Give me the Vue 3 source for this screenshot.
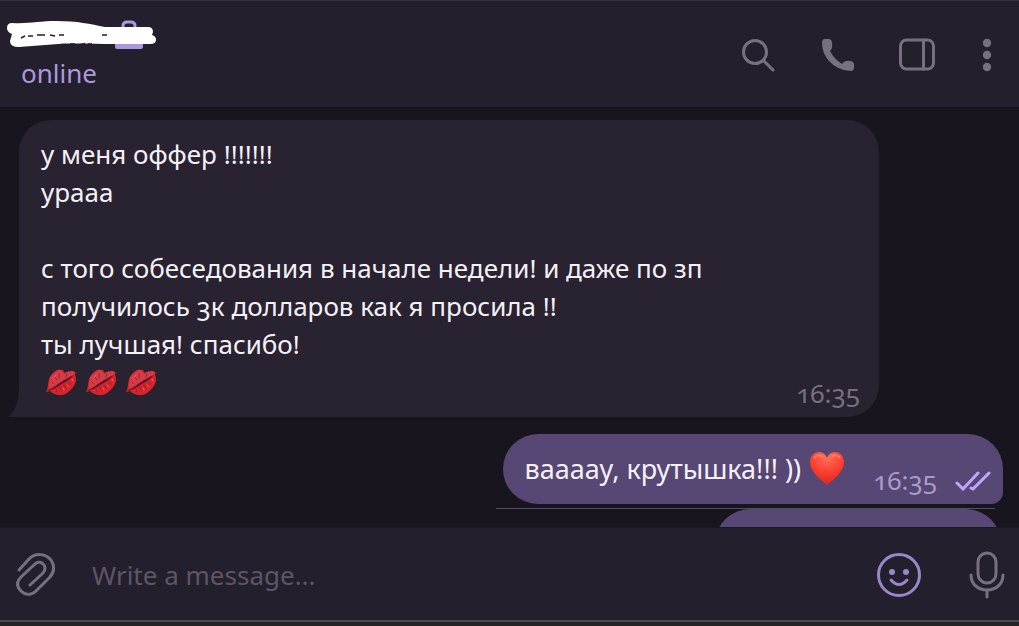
<script setup>
import { ref } from 'vue'

const draft = ref('')
const incoming = [
  'у меня оффер !!!!!!!',
  'урааа',
  '',
  'с того собеседования в начале недели! и даже по зп',
  'получилось 3к долларов как я просила !!',
  'ты лучшая! спасибо!'
]
</script>

<template>
  <div class="app">
    <header class="header">
      <div class="peer">
        <svg class="name" width="160" height="39" viewBox="0 0 160 39" aria-label="Hidden name" role="img">
          <path d="M123 13V11Q123 7 127 7H131Q135 7 135 11V13" fill="none" stroke="#ab98df" stroke-width="3" />
          <rect x="115" y="16" width="28" height="18" rx="2" fill="#ab98df" />
          <path d="M12 8C28 9 40 6 56 6C78 6 90 9 105 12H148Q153 12 153 17L152 20Q156 21 156 25Q156 29 150 29H115C94 29 78 28 58 29L19 32Q10 32 10 26L12 19Q7 17 7 13Q7 8 12 8Z" fill="#fff" />
          <path d="M21 23L25 21M28 21H33M37 20H45M50 20L55 21M59 20H64M102 20H107M61 29.500H66M70 29H75M79 30L85 28.500M88 29H92" stroke="#241f2c" stroke-width="1.500" />
        </svg>
        <span class="status">online</span>
      </div>
      <nav class="tools">
        <button aria-label="Search">
          <svg width="36" height="36" viewBox="0 0 36 36"><circle cx="14" cy="14" r="11.500" /><path d="M22.500 22.500L32 32" stroke-width="3" /></svg>
        </button>
        <button aria-label="Call">
          <svg width="36" height="36" viewBox="0 0 36 36"><path class="solid" d="M5 1H8Q12 1 12 5Q13 10 10 13Q14 21 22 26Q25 22 30 23Q34 23 34 27V30Q34 33 30 33Q17 32 9 23Q2 15 2 5Q2 1 5 1Z" /></svg>
        </button>
        <button aria-label="Toggle side panel">
          <svg width="36" height="36" viewBox="0 0 36 36"><rect x="1.500" y="2" width="33" height="29" rx="6" /><path d="M24.500 2V31" /></svg>
        </button>
        <button class="more" aria-label="More">
          <svg width="10" height="36" viewBox="0 0 10 36"><g class="solid"><circle cx="5" cy="5" r="4.200" /><circle cx="5" cy="17" r="4.200" /><circle cx="5" cy="29" r="4.200" /></g></svg>
        </button>
      </nav>
    </header>

    <main class="chat">
      <article class="bubble in">
        <p v-for="(line, i) in incoming" :key="i">{{ line }}</p>
        <div class="kisses">
          <svg v-for="n in 3" :key="n" width="32" height="28" viewBox="0 0 32 28" role="img" aria-label="Kiss mark">
            <path d="M1 24C4 20 2 14 5 9C8 4 13 0 17 2Q19 2 19 5C23 3 28 2 30 4Q31 5 30 7C33 13 29 20 22 25C16 29 9 27 5 23Z" fill="#d8232b" />
            <path d="M5 10C8 4 14 1 17 3L19 6C23 3 28 3 30 5L26 9L20 11L10 18L4 21Z" fill="#d63c48" />
            <path d="M2 23C7 20 10 19 13 16C18 13 24 9 29 7C24 12 19 15 15 17C11 20 7 22 2 23Z" fill="#4c1727" />
            <path d="M10 9L12 12M14 6V10M22 6L21 9M7 14L9 16M15 19L16 22M19 17L21 20M23 14L26 16M11 21L12 24" stroke="#9b1e30" stroke-width="1" stroke-linecap="round" />
            <path d="M18 20L19 22M22 17L24 19M9 10L11 7M27 11L28 13" stroke="#f1656b" stroke-width="1" stroke-linecap="round" />
          </svg>
        </div>
        <time>16:35</time>
        <svg class="tail" width="26" height="34" viewBox="0 0 26 34" aria-hidden="true"><path d="M11 0C11 19 8 27 0 34H26V0Z" /></svg>
      </article>

      <article class="bubble out">
        <p>ваааау, крутышка!!! ))</p>
        <svg class="heart" width="36" height="36" viewBox="0 0 36 36" role="img" aria-label="Red heart">
          <defs><radialGradient id="heart-fill" cx="50%" cy="15%" r="85%"><stop offset="0" stop-color="#ff725a" /><stop offset=".55" stop-color="#fc3f2f" /><stop offset="1" stop-color="#d92720" /></radialGradient></defs>
          <path d="M18 34C12 29 1 21 1 11C1 5 5 1 10 1C14 1 17 4 18 7C19 4 22 1 26 1C31 1 35 5 35 11C35 21 24 29 18 34Z" fill="url(#heart-fill)" />
          <path d="M5 7Q8 3 13 5M23 5Q28 3 31 7" fill="none" stroke="#ff9a83" stroke-width="2" stroke-linecap="round" opacity=".6" />
        </svg>
        <time>16:35</time>
        <svg class="checks" width="36" height="20" viewBox="0 0 36 20" role="img" aria-label="Read"><path d="M2 12L8 18L23 2M16 17L18 18L34 2" /></svg>
      </article>

      <div class="next">
        <div class="bubble pending"></div>
      </div>
    </main>

    <footer class="composer">
      <button aria-label="Attach a file">
        <svg width="40" height="44" viewBox="0 0 40 44"><path d="M3 17L13 6C20-1 30 1 35 7C39 13 38 19 34 24L20 38C15 43 9 42 5 38C0 33 1 28 5 24L19 11C22 8 26 9 28 12C30 15 29 18 26 21L14 32" /></svg>
      </button>
      <input v-model="draft" type="text" aria-label="Message" placeholder="Write a message..." />
      <button class="emoji" aria-label="Emoji">
        <svg width="44" height="44" viewBox="0 0 44 44"><circle cx="22" cy="22" r="20.500" /><g class="solid"><circle cx="15" cy="19" r="3" /><circle cx="29" cy="19" r="3" /></g><path d="M14 27Q22 36 30 27" /></svg>
      </button>
      <button class="mic" aria-label="Record voice message">
        <svg width="36" height="48" viewBox="0 0 36 48"><rect x="9" y="2" width="18" height="30" rx="9" /><path d="M2 24C2 44 34 44 34 24M18 39V46" /></svg>
      </button>
    </footer>
  </div>
</template>

<style>
body {
  margin: 0;
  background: #262324;
}
</style>

<style scoped>
.app {
  display: flex;
  flex-direction: column;
  height: 100vh;
  box-sizing: border-box;
  padding-bottom: 4px;
  color: #f4f1f7;
  background: #262324;
  font: 26px/38px "Noto Sans", sans-serif;
  font-variant-numeric: oldstyle-nums;
}

.header {
  display: flex;
  flex: none;
  justify-content: space-between;
  box-sizing: border-box;
  height: 107px;
  padding: 14px 27px 0 0;
  border-top: 1px solid #36323b;
  background: #241f2c;
}

.peer {
  display: flex;
  flex-direction: column;
}

.name {
  display: block;
}

.status {
  padding-left: 21px;
  color: #ab98df;
}

.tools {
  display: flex;
  align-items: center;
  gap: 43px;
  height: 82px;
}

.more {
  margin-left: 4px;
}

button {
  display: flex;
  padding: 0;
  border: 0;
  color: #777080;
  background: none;
  cursor: pointer;
}

button svg {
  fill: none;
  stroke: currentColor;
  stroke-width: 3;
  stroke-linecap: round;
  stroke-linejoin: round;
}

button .solid {
  fill: currentColor;
  stroke: none;
}

.chat {
  display: flex;
  flex: 1;
  flex-direction: column;
  min-height: 0;
  padding-top: 13px;
  overflow: hidden;
  background: #19151f;
}

.bubble {
  position: relative;
  flex: none;
  box-sizing: border-box;
}

.bubble p {
  min-height: 38px;
  margin: 0;
}

time {
  color: #77707e;
}

.in {
  margin: 0 140px 17px 19px;
  padding: 15px 22px 16px;
  border-radius: 32px 32px 32px 0;
  background: #292230;
}

.in time {
  position: absolute;
  right: 19px;
  bottom: 5px;
}

.tail {
  position: absolute;
  bottom: 0;
  left: -11px;
  fill: #292230;
}

.kisses {
  display: flex;
  align-items: center;
  gap: 8px;
  height: 38px;
  padding-left: 4px;
}

.out {
  display: flex;
  align-items: center;
  align-self: flex-end;
  height: 70px;
  margin-right: 16px;
  padding: 0 12px 0 22px;
  border-radius: 35px 35px 12px 35px;
  background: #574774;
}

.out p {
  font-size: 27px;
}

.heart {
  margin: 0 28px 0 8px;
}

.out time {
  padding-top: 22px;
  color: #a99bc7;
}

.checks {
  margin: 24px 0 0 18px;
  fill: none;
  stroke: #bea6fa;
  stroke-width: 3;
  stroke-linecap: round;
}

.next {
  align-self: flex-end;
  width: 49%;
  margin: 4px 24px 0 0;
  border-top: 1px solid #544c5d;
}

.pending {
  width: 286px;
  height: 70px;
  margin: 0 -6px 0 auto;
  border-radius: 35px;
  background: #574774;
}

.composer {
  display: flex;
  flex: none;
  align-items: center;
  box-sizing: border-box;
  height: 95px;
  padding: 2px 14px 0 16px;
  border-top: 1px solid #1c1823;
  border-bottom: 2px solid #4d494e;
  background: #241f2c;
}

input {
  flex: 1;
  min-width: 0;
  margin: 0 36px;
  padding: 0;
  border: 0;
  outline: 0;
  color: #f4f1f7;
  background: none;
  font: inherit;
}

input::placeholder {
  color: #5d5664;
  opacity: 1;
}

.emoji {
  margin-right: 48px;
  color: #9987c9;
}
</style>
